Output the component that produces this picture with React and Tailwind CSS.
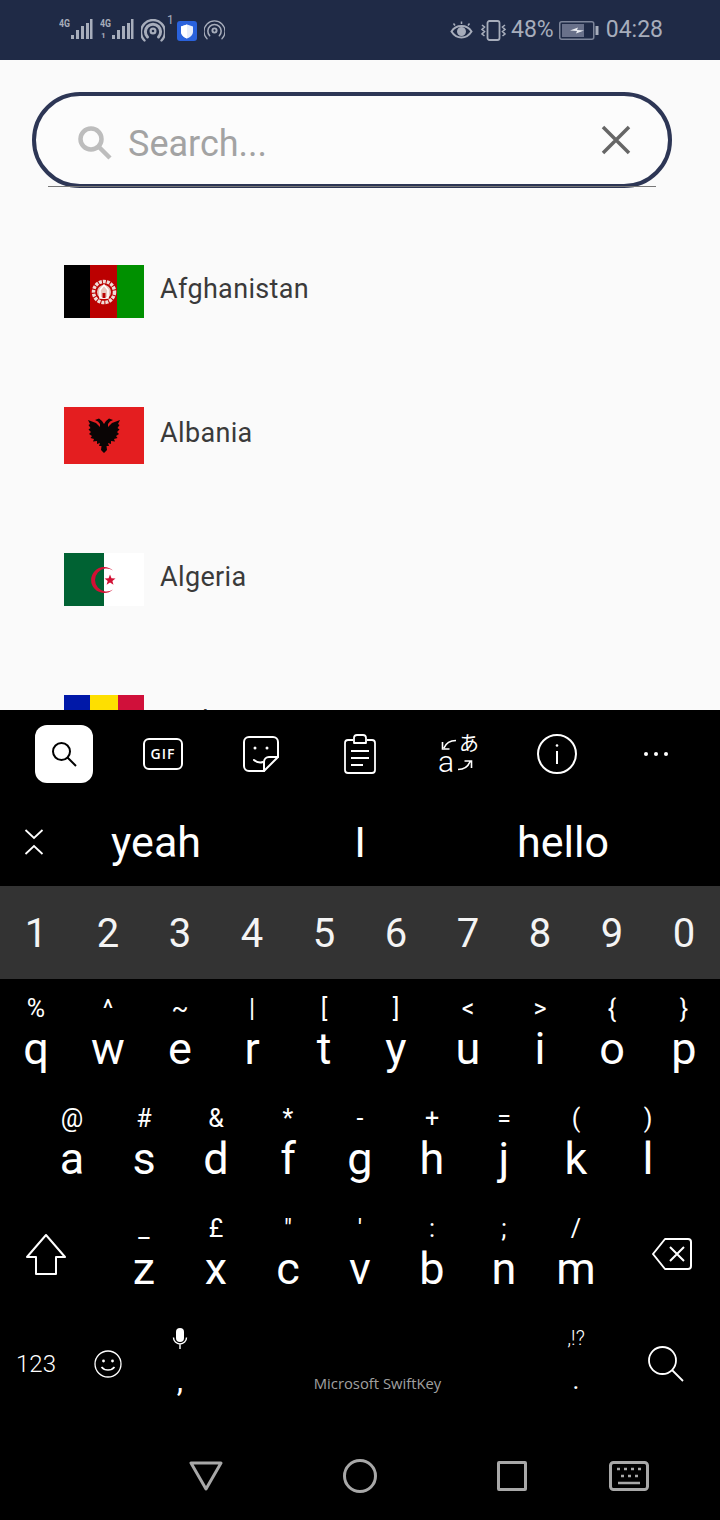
const ROBOTO = "font-['Roboto',sans-serif]";

function Signal({ dual }) {
  return (
    <svg width="34" height="24" viewBox="0 0 34 24" fill="#a7adbb">
      <text x="0" y="9" fontSize="10.5" fontWeight="700" fontFamily="Roboto, sans-serif" textLength="11" lengthAdjust="spacingAndGlyphs">4G</text>
      {dual && <text x="1" y="20" fontSize="8" fontWeight="700" fontFamily="Roboto, sans-serif">1</text>}
      <rect x="12" y="17" width="3" height="4" />
      <rect x="17" y="12" width="3" height="9" />
      <rect x="22" y="8" width="3" height="13" />
      <rect x="27" y="5" width="3" height="16" />
      <rect x="31" y="1" width="2.5" height="20" />
    </svg>
  );
}

function Hotspot({ size = 24, w = 3 }) {
  return (
    <svg width={size} height={size} viewBox="0 0 24 24" fill="none" stroke="#a7adbb" strokeWidth={w} strokeLinecap="round">
      <circle cx="12" cy="12" r="2.4" strokeWidth="2.2" />
      <path d="M6.5 18a7.6 7.6 0 1 1 11 0" />
      <path d="M3.5 21.5a12 12 0 1 1 17 0" strokeWidth={w * 0.8} />
    </svg>
  );
}

function StatusBar() {
  return (
    <div className={`flex h-[60px] items-center justify-between bg-[#1f2a46] pl-[59px] pr-[57px] ${ROBOTO}`}>
      <div className="flex items-center">
        <Signal />
        <div className="ml-[7px]"><Signal dual /></div>
        <div className="ml-[7px] mt-[1px]"><Hotspot /></div>
        <span className="mb-[21px] ml-[2px] w-[10px] text-[12px] leading-[12px] text-[#a7adbb]">1</span>
        <div className="mt-[2px] flex h-[20px] w-[20px] items-center justify-center rounded-[3px] bg-[#2a62dc]">
          <svg width="14" height="15" viewBox="0 0 14 15">
            <path d="M7 0.5 13 2.5V7.5C13 11 10 13.5 7 14.5 4 13.5 1 11 1 7.5V2.5Z" fill="#e8eefb" />
            <path d="M7 0.5 1 2.5V7.5C1 11 4 13.5 7 14.5Z" fill="#ffffff" />
          </svg>
        </div>
        <div className="ml-[7px] mt-[1px]"><Hotspot size={21} w={1.8} /></div>
      </div>
      <div className="flex items-center text-[#a7adbb]">
        <svg width="23" height="18" viewBox="0 0 23 18" fill="none" stroke="#a7adbb" strokeWidth="2">
          <path d="M1.5 10.5C4 6.5 7.5 5 11.5 5s7.5 1.5 10 5.5c-2.5 4-6 6-10 6s-7.5-2-10-6Z" />
          <circle cx="11.5" cy="10.5" r="3.5" fill="#a7adbb" />
          <path d="M5 4.5 3.5 2.5M11.5 3V.5M18 4.5l1.5-2" strokeWidth="1.5" />
        </svg>
        <svg className="ml-[7px]" width="27" height="21" viewBox="0 0 27 21" fill="none" stroke="#a7adbb">
          <rect x="7.5" y="1" width="12" height="19" rx="2" strokeWidth="1.8" />
          <path d="M2 5l2.5 2L2 9.5l2.5 2L2 14l2.5 2M25 5l-2.5 2L25 9.5l-2.5 2L25 14l-2.5 2" strokeWidth="1.6" />
        </svg>
        <span className="ml-[4px] text-[23px] leading-[24px]">48%</span>
        <svg className="ml-[5px]" width="40" height="19" viewBox="0 0 40 19" fill="none">
          <rect x="0.75" y="0.75" width="34" height="17.5" rx="2" stroke="#7d859a" strokeWidth="1.5" />
          <rect x="3" y="3" width="22" height="13" fill="#69718a" />
          <path d="M36.5 5h3v9h-3z" fill="#a7adbb" />
          <path d="M11 9.5 19 6.5l-1 2.5 7 .5-8 3 1-2.500z" fill="#eceef3" />
        </svg>
        <span className="ml-[7px] text-[23px] leading-[24px]">04:28</span>
      </div>
    </div>
  );
}

function AfghanFlag() {
  return (
    <svg width="80" height="53" viewBox="0 0 80 53" className="block shrink-0">
      <rect width="27" height="53" fill="#000" />
      <rect x="26" width="27" height="53" fill="#bb0000" />
      <rect x="53" width="27" height="53" fill="#009000" />
      <circle cx="40" cy="27" r="10.5" fill="none" stroke="#f0dcd8" strokeWidth="3.5" strokeDasharray="3 1" />
      <circle cx="40" cy="27" r="7" fill="#e8c4bc" />
      <path d="M36 33V25l4-5 4 5v8z" fill="none" stroke="#fff" strokeWidth="1.5" />
      <path d="M38.5 33v-5h3v5z" fill="#bb0000" />
    </svg>
  );
}

function EagleHalf() {
  return (
    <path d="M40 17 38 14 35 11.5 31 13 34 14.5 36 17 36 20 32 16 24 13 26 17 24.5 18 26.5 21 24.5 22.5 27 25 25 27 28 29 26.5 31 30 32 29 34.5 33 34 33 37 36 36 35 39 37.5 39 37 43 40 46Z" />
  );
}

function AlbanianFlag() {
  return (
    <svg width="80" height="57" viewBox="0 0 80 57" className="block shrink-0">
      <rect width="80" height="57" fill="#e41e20" />
      <g fill="#0a0505">
        <EagleHalf />
        <g transform="matrix(-1 0 0 1 80 0)">
          <EagleHalf />
        </g>
      </g>
    </svg>
  );
}

function AlgerianFlag() {
  return (
    <svg width="80" height="53" viewBox="0 0 80 53" className="block shrink-0">
      <rect width="40" height="53" fill="#006233" />
      <rect x="40" width="40" height="53" fill="#fff" />
      <path d="M49 17.5A13 13 0 1 0 49 36.5 11.5 11.5 0 1 1 49 17.5Z" fill="#d21034" />
      <path d="M46 21.5l1.500 3.700 4 .2-3.100 2.500 1.100 3.800-3.500-2.200-3.400 2.200 1.100-3.800-3.100-2.500 4-.2z" fill="#d21034" />
    </svg>
  );
}

function AndorranFlag() {
  return (
    <div className="flex h-[56px] w-[80px] shrink-0">
      <div className="w-[26px] bg-[#0018a8]" />
      <div className="w-[28px] bg-[#fedf00]" />
      <div className="w-[26px] bg-[#d0103a]" />
    </div>
  );
}

const COUNTRIES = [
  { name: "Afghanistan", Flag: AfghanFlag },
  { name: "Albania", Flag: AlbanianFlag },
  { name: "Algeria", Flag: AlgerianFlag },
  { name: "Andorra", Flag: AndorranFlag },
];

function SearchField() {
  return (
    <div className="pt-[32px]">
      <div className="ml-[32px] mr-[48px] flex h-[96px] items-center rounded-[48px] border-4 border-[#2d3655] bg-[#fcfcfc] pl-[42px] pr-[37px]">
        <svg width="34" height="34" viewBox="0 0 34 34" fill="none" stroke="#bdbdbd" strokeWidth="4.5" className="mt-[6px] shrink-0">
          <circle cx="13" cy="13" r="10.5" />
          <path d="M21 21 32 32" />
        </svg>
        <span className={`ml-[16px] mt-[8px] flex-1 text-[36px] leading-[40px] text-[#a3a3a3] ${ROBOTO}`}>Search...</span>
        <svg width="30" height="30" viewBox="0 0 30 30" fill="none" stroke="#666" strokeWidth="3.5" className="shrink-0">
          <path d="M2 2 28 28M28 2 2 28" />
        </svg>
      </div>
      <div className="ml-[48px] mr-[64px] -mt-[2px] h-px bg-[#777]" />
    </div>
  );
}

function CountryRow({ name, Flag }) {
  return (
    <div className="flex h-[144px] items-center gap-[16px] pl-[64px]">
      <Flag />
      <span className={`mb-[4px] text-[27px] leading-[36px] tracking-[0.35px] text-[#3a3a3a] ${ROBOTO}`}>{name}</span>
    </div>
  );
}

function Toolbar() {
  return (
    <div className="flex h-[88px] items-center pb-[1px] text-white">
      <div className="ml-[35px] flex h-[58px] w-[58px] items-center justify-center rounded-[12px] bg-white">
        <svg width="26" height="26" viewBox="0 0 26 26" fill="none" stroke="#000" strokeWidth="2">
          <circle cx="10.5" cy="10.5" r="8.5" />
          <path d="M16.5 16.5 25 25" />
        </svg>
      </div>
      <div className="ml-[50px] flex h-[32px] w-[40px] items-center justify-center rounded-[6px] border-2 border-white text-[14px] font-semibold leading-none tracking-[1px] font-['Open_Sans',sans-serif]">GIF</div>
      <svg className="ml-[60px]" width="36" height="36" viewBox="0 0 36 36" fill="none" stroke="#fff" strokeWidth="2" strokeLinejoin="round" strokeLinecap="round">
        <path d="M21 35H6a5 5 0 0 1-5-5V6a5 5 0 0 1 5-5h24a5 5 0 0 1 5 5v15Z" />
        <path d="M21 35v-9a5 5 0 0 1 5-5h9" />
        <path d="M11 24c3 2.5 6 3 9 2" />
        <circle cx="12" cy="12" r="1.5" fill="#fff" stroke="none" />
        <circle cx="24" cy="12" r="1.5" fill="#fff" stroke="none" />
      </svg>
      <svg className="ml-[65px]" width="32" height="40" viewBox="0 0 32 40" fill="none" stroke="#fff" strokeWidth="1.8" strokeLinejoin="round">
        <path d="M9 6H4a3 3 0 0 0-3 3v27a3 3 0 0 0 3 3h24a3 3 0 0 0 3-3V9a3 3 0 0 0-3-3h-5" />
        <path d="M10 9V4a3 3 0 0 1 3-3h6a3 3 0 0 1 3 3v5z" />
        <path d="M7 17h18M7 24h18M7 31h12" />
      </svg>
      <div className="ml-[62px] flex h-[40px] w-[41px] flex-col justify-between">
        <div className="flex h-[20px] items-start justify-end gap-[2px]">
          <svg width="16" height="12" viewBox="0 0 16 12" fill="none" stroke="#fff" strokeWidth="1.6" className="mt-[5px]">
            <path d="M15 1.5C9 1.5 5 4 3 9M1.5 3v7h7" />
          </svg>
          <span className="-mt-[1px] font-['Noto_Sans_CJK_JP',sans-serif] text-[20px] leading-[20px]">あ</span>
        </div>
        <div className="flex h-[20px] items-end gap-[3px]">
          <span className="font-['Roboto',sans-serif] text-[30px] font-light leading-[24px]">a</span>
          <svg width="16" height="12" viewBox="0 0 16 12" fill="none" stroke="#fff" strokeWidth="1.6" className="mb-[3px]">
            <path d="M1 10.5c6 0 10-2.5 12-8M14.5 9V2h-7" />
          </svg>
        </div>
      </div>
      <svg className="ml-[58px]" width="40" height="40" viewBox="0 0 40 40" fill="none" stroke="#fff" strokeWidth="2">
        <circle cx="20" cy="20" r="19" />
        <path d="M20 17v13" />
        <circle cx="20" cy="11.5" r="1.3" fill="#fff" stroke="none" />
      </svg>
      <div className="ml-[67px] flex w-[24px] justify-between">
        <div className="h-[4px] w-[4px] rounded-full bg-white" />
        <div className="h-[4px] w-[4px] rounded-full bg-white" />
        <div className="h-[4px] w-[4px] rounded-full bg-white" />
      </div>
    </div>
  );
}

function Suggestions() {
  return (
    <div className={`flex h-[88px] items-center text-[43px] leading-[48px] text-white ${ROBOTO}`}>
      <div className="flex w-[68px] justify-center">
        <svg width="20" height="26" viewBox="0 0 20 26" fill="none" stroke="#fff" strokeWidth="1.8">
          <path d="M1.5 1 10 9l8.5-8M1.5 25 10 17l8.5 8" />
        </svg>
      </div>
      <div className="w-[176px] text-center">yeah</div>
      <div className="w-[232px] text-center">I</div>
      <div className="w-[174px] text-center">hello</div>
    </div>
  );
}

function NumberRow() {
  return (
    <div className={`flex h-[93px] items-center bg-[#333] pt-[2px] text-[40px] leading-[44px] text-[#f4f4f4] ${ROBOTO}`}>
      {"1234567890".split("").map((n) => (
        <div key={n} className="w-[72px] text-center">{n}</div>
      ))}
    </div>
  );
}

function Key({ top, letter }) {
  return (
    <div className={`flex h-[110px] w-[72px] shrink-0 flex-col items-center pt-[16px] text-white ${ROBOTO}`}>
      <div className="h-[28px] text-[25px] leading-[28px]">{top}</div>
      <div className="mt-[2px] text-[45px] leading-[48px]">{letter}</div>
    </div>
  );
}

const ROW1 = [["%", "q"], ["^", "w"], ["~", "e"], ["|", "r"], ["[", "t"], ["]", "y"], ["<", "u"], [">", "i"], ["{", "o"], ["}", "p"]];
const ROW2 = [["@", "a"], ["#", "s"], ["&", "d"], ["*", "f"], ["-", "g"], ["+", "h"], ["=", "j"], ["(", "k"], [")", "l"]];
const ROW3 = [["_", "z"], ["£", "x"], ['"', "c"], ["'", "v"], [":", "b"], [";", "n"], ["/", "m"]];

function BottomRow() {
  return (
    <div className={`flex h-[110px] text-white ${ROBOTO}`}>
      <div className="flex w-[72px] items-center justify-center text-[24px] font-light leading-[28px]">123</div>
      <div className="flex w-[72px] items-center justify-center">
        <svg width="28" height="28" viewBox="0 0 28 28" fill="none" stroke="#fff" strokeWidth="1.3">
          <circle cx="14" cy="14" r="13" />
          <circle cx="9.5" cy="11" r="1.4" fill="#fff" stroke="none" />
          <circle cx="18.5" cy="11" r="1.4" fill="#fff" stroke="none" />
          <path d="M7.5 17c3 4 10 4 13 0" strokeWidth="1.6" />
        </svg>
      </div>
      <div className="flex w-[72px] flex-col items-center pt-[19px]">
        <svg width="16" height="21" viewBox="0 0 16 21" fill="none" stroke="#fff">
          <rect x="4" y="0" width="8" height="14" rx="4" fill="#fff" stroke="none" />
          <path d="M1.5 9.5a6.5 6.5 0 0 0 13 0M8 16v5" strokeWidth="1.4" />
        </svg>
        <div className="mt-[15px] text-[32px] leading-[32px]">,</div>
      </div>
      <div className="flex w-[324px] items-start justify-center pr-[1px] pt-[65px]">
        <span className="font-['Open_Sans',sans-serif] text-[14.8px] leading-[18px] text-[#a0a0a0]">Microsoft SwiftKey</span>
      </div>
      <div className="flex w-[72px] flex-col items-center pt-[17px]">
        <div className="text-[20px] font-light leading-[24px]">,!?</div>
        <div className="mt-[15px] text-[26px] leading-[30px]">.</div>
      </div>
      <div className="flex w-[108px] items-center justify-center">
        <svg width="36" height="36" viewBox="0 0 36 36" fill="none" stroke="#fff" strokeWidth="1.8">
          <circle cx="14.5" cy="14.5" r="13.5" />
          <path d="M24 24 35 35" />
        </svg>
      </div>
    </div>
  );
}

function NavBar() {
  return (
    <div className="flex h-[91px] items-center pt-[23px] pl-[129px]">
      <div className="flex w-[154px] justify-center">
        <svg width="34" height="30" viewBox="0 0 34 30" fill="none" stroke="#a8a8a8" strokeWidth="3" strokeLinejoin="round">
          <path d="M2 2H32L17 28Z" />
        </svg>
      </div>
      <div className="flex w-[154px] justify-center">
        <svg width="34" height="34" viewBox="0 0 34 34" fill="none" stroke="#a8a8a8" strokeWidth="3">
          <circle cx="17" cy="17" r="15.5" />
        </svg>
      </div>
      <div className="flex w-[150px] justify-center">
        <div className="h-[30px] w-[30px] rounded-[2px] border-[3px] border-[#a8a8a8]" />
      </div>
      <div className="flex w-[84px] justify-center">
        <svg width="40" height="30" viewBox="0 0 40 30" fill="none" stroke="#a8a8a8">
          <rect x="1.5" y="1.5" width="37" height="27" rx="3" strokeWidth="3" />
          <path d="M8 8h3M15 8h3M22 8h3M29 8h3M12 15h3M19 15h3M26 15h3M9 22h22" strokeWidth="2.5" />
        </svg>
      </div>
    </div>
  );
}

function Keyboard() {
  return (
    <div className="h-[810px] bg-black">
      <Toolbar />
      <Suggestions />
      <NumberRow />
      <div className="flex">
        {ROW1.map(([t, l]) => <Key key={l} top={t} letter={l} />)}
      </div>
      <div className="flex pl-[36px]">
        {ROW2.map(([t, l]) => <Key key={l} top={t} letter={l} />)}
      </div>
      <div className="flex">
        <div className="flex w-[108px] items-center justify-center pr-[16px]">
          <svg width="40" height="41" viewBox="0 0 40 41" fill="none" stroke="#fff" strokeWidth="2" strokeLinejoin="round">
            <path d="M20 1 39 23H30V40H10V23H1Z" />
          </svg>
        </div>
        {ROW3.map(([t, l]) => <Key key={l} top={t} letter={l} />)}
        <div className="flex w-[108px] items-center justify-center pl-[12px]">
          <svg width="40" height="32" viewBox="0 0 40 32" fill="none" stroke="#fff" strokeWidth="2" strokeLinejoin="round">
            <path d="M13 1H36a3 3 0 0 1 3 3V28a3 3 0 0 1-3 3H13L1 16Z" />
            <path d="M18 9 32 23M32 9 18 23" />
          </svg>
        </div>
      </div>
      <BottomRow />
      <NavBar />
    </div>
  );
}

export default function App() {
  return (
    <div className="h-[1520px] w-[720px] overflow-hidden">
      <StatusBar />
      <div className="h-[650px] overflow-hidden bg-[#fafafa]">
        <SearchField />
        <div className="pt-[32px]">
          {COUNTRIES.map((c) => (
            <CountryRow key={c.name} name={c.name} Flag={c.Flag} />
          ))}
        </div>
      </div>
      <Keyboard />
    </div>
  );
}
